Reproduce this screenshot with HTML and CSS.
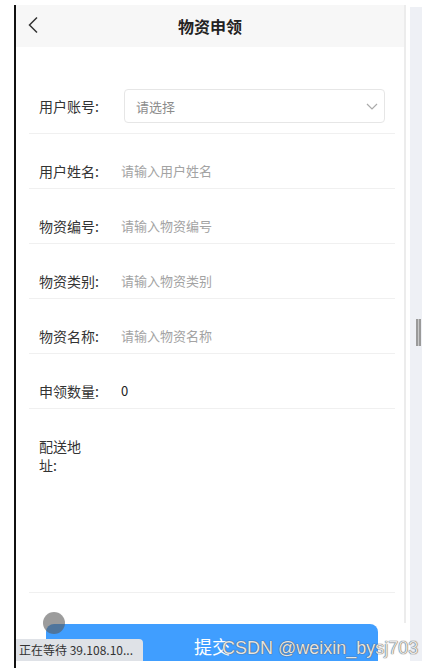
FILE: index.html
```html
<!DOCTYPE html>
<html lang="zh-CN">
<head>
<meta charset="utf-8">
<title>物资申领</title>
<link rel="stylesheet" href="styles.css">
</head>
<body>
<div class="window">
  <div class="gutter"></div>
  <div class="edge"></div>
  <div class="viewport">
    <div class="app">
      <header class="nav">
        <svg class="back" width="12" height="18" viewBox="0 0 12 18"><path d="M10 1.5 L2.5 9 L10 16.5" fill="none" stroke="#333" stroke-width="1.5"/></svg>
        <h1 class="title">物资申领</h1>
      </header>
      <form class="form">
        <div class="row row-select">
          <span class="label">用户账号:</span>
          <div class="select">
            <span class="select-text">请选择</span>
            <svg width="12" height="7" viewBox="0 0 12 7"><path d="M1 1 L6 6 L11 1" fill="none" stroke="#aaa" stroke-width="1.2"/></svg>
          </div>
        </div>
        <div class="row">
          <span class="label">用户姓名:</span>
          <span class="placeholder">请输入用户姓名</span>
        </div>
        <div class="row">
          <span class="label">物资编号:</span>
          <span class="placeholder">请输入物资编号</span>
        </div>
        <div class="row">
          <span class="label">物资类别:</span>
          <span class="placeholder">请输入物资类别</span>
        </div>
        <div class="row">
          <span class="label">物资名称:</span>
          <span class="placeholder">请输入物资名称</span>
        </div>
        <div class="row">
          <span class="label">申领数量:</span>
          <span class="value">0</span>
        </div>
        <div class="row row-area">
          <span class="label label-narrow">配送地址:</span>
        </div>
        <div class="actions">
          <div class="submit">提交</div>
        </div>
      </form>
    </div>
    <div class="app-border"></div>
    <div class="gap"></div>
    <div class="scrollbar"><div class="thumb"></div></div>
    <div class="dot"></div>
    <div class="status">正在等待 39.108.10...</div>
  </div>
</div>
<div class="watermark">CSDN @weixin_bysj703</div>
</body>
</html>
```

FILE: styles.css
```css
* { box-sizing: border-box; }
html, body { margin: 0; padding: 0; background: #fff; }
body {
  width: 442px;
  height: 668px;
  overflow: hidden;
  position: relative;
  font-family: "Noto Sans CJK SC", "Noto Sans", sans-serif;
}
.window {
  display: flex;
  padding-top: 5px;
  height: 668px;
  align-items: flex-start;
}
.gutter { width: 14px; flex: none; }
.edge { width: 2px; height: 663px; background: #111; flex: none; }
.viewport {
  position: relative;
  display: flex;
  align-items: flex-start;
  width: 406px;
  height: 656px;
  overflow: hidden;
  flex: none;
}
.app {
  width: 388px;
  flex: none;
  display: flex;
  flex-direction: column;
}
.app > * { flex: none; }
.nav {
  height: 42px;
  background: #f7f7f7;
  display: flex;
  align-items: center;
  justify-content: center;
  position: relative;
}
.back {
  position: absolute;
  left: 11px;
  top: 11px;
}
.title {
  margin: 0;
  font-size: 16px;
  font-weight: 700;
  color: #222;
  line-height: 22px;
}
.form {
  margin: 0;
  padding: 32px 9px 0 13px;
  display: flex;
  flex-direction: column;
}
.form > * { flex: none; }
.row {
  height: 55px;
  display: flex;
  align-items: flex-end;
  border-bottom: 1px solid #f0f0f0;
  padding: 0 0 7px 10px;
}
.row-select {
  align-items: center;
  padding: 0 0 0 10px;
}
.label {
  width: 82px;
  flex: none;
  font-size: 14px;
  color: #333;
  line-height: 20px;
}
.placeholder {
  font-size: 13px;
  color: #a3a3a3;
  line-height: 20px;
}
.value {
  font-size: 13px;
  color: #222;
  line-height: 20px;
}
.select {
  margin-left: 3px;
  width: 261px;
  height: 34px;
  border: 1px solid #e6e6e6;
  border-radius: 4px;
  display: flex;
  align-items: center;
  justify-content: space-between;
  padding: 0 6px 0 11px;
}
.select-text {
  font-size: 13px;
  color: #8c8c8c;
}
.row-area {
  height: 184px;
  align-items: flex-start;
  padding: 28px 0 0 10px;
}
.label-narrow {
  width: 50px;
  line-height: 19px;
}
.actions {
  padding: 31px 0 0 17px;
}
.submit {
  width: 332px;
  height: 44px;
  background: #409eff;
  border-radius: 8px;
  color: #fff;
  font-size: 18px;
  display: flex;
  align-items: center;
  justify-content: center;
}
.app-border {
  width: 2px;
  height: 618px;
  background: #ececec;
  flex: none;
}
.gap { width: 4px; flex: none; }
.scrollbar {
  width: 12px;
  flex: none;
  height: 656px;
  margin-top: 2px;
  background: #eef0f5;
  padding-top: 312px;
  padding-left: 6px;
}
.thumb {
  width: 5px;
  height: 27px;
  border-left: 2px solid #9a9a9a;
  border-right: 2px solid #9a9a9a;
  background: #c8c8c8;
}
.dot {
  position: absolute;
  left: 27px;
  top: 607px;
  width: 22px;
  height: 22px;
  border-radius: 50%;
  background: rgba(90, 90, 90, 0.6);
  filter: blur(0.6px);
}
.status {
  position: absolute;
  left: 0;
  bottom: 0;
  width: 127px;
  height: 22px;
  background: #dfe2e7;
  border-top-right-radius: 4px;
  font-size: 12px;
  color: #333;
  line-height: 22px;
  padding-left: 3px;
  white-space: nowrap;
}
.watermark {
  position: absolute;
  left: 222px;
  top: 636px;
  font-family: "Liberation Sans", Arial, sans-serif;
  font-size: 18px;
  line-height: 24px;
  color: rgba(255, 255, 255, 0.85);
  text-shadow: 0 0 1px #555, 0 0 1px #555;
  white-space: nowrap;
}
```
